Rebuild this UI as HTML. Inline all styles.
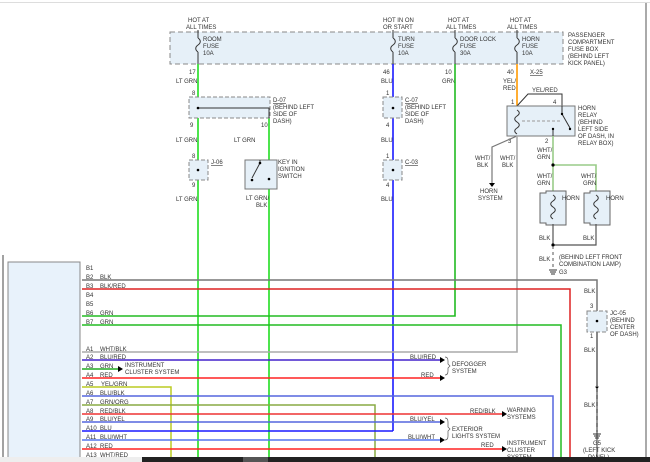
<!DOCTYPE html>
<html><head><meta charset="utf-8"><style>
html,body{margin:0;padding:0;background:#fff;}
svg{display:block;font-family:"Liberation Sans",sans-serif;}
text{font-size:6px;fill:#333;}
</style></head><body>
<svg width="650" height="462" viewBox="0 0 650 462" xmlns="http://www.w3.org/2000/svg">
<rect width="650" height="462" fill="#fff"/>
<line x1="0" y1="2.5" x2="650" y2="2.5" stroke="#ddd" stroke-width="1"/>
<line x1="646" y1="3" x2="646" y2="462" stroke="#555" stroke-width="1"/>
<line x1="3" y1="255" x2="3" y2="462" stroke="#444" stroke-width="1"/>

<!-- fuse box -->
<rect x="170" y="32" width="393" height="32" fill="#e6f0f8" stroke="#888" stroke-dasharray="5,3" stroke-width="1"/>
<g>
<text x="188" y="22">HOT AT</text><text x="186" y="29">ALL TIMES</text>
<text x="383" y="22">HOT IN ON</text><text x="383" y="29">OR START</text>
<text x="448" y="22">HOT AT</text><text x="446" y="29">ALL TIMES</text>
<text x="510" y="22">HOT AT</text><text x="507" y="29">ALL TIMES</text>
<text x="203" y="41">ROOM</text><text x="203" y="48">FUSE</text><text x="203" y="55">10A</text>
<text x="398" y="41">TURN</text><text x="398" y="48">FUSE</text><text x="398" y="55">10A</text>
<text x="460" y="41">DOOR LOCK</text><text x="460" y="48">FUSE</text><text x="460" y="55">30A</text>
<text x="522" y="41">HORN</text><text x="522" y="48">FUSE</text><text x="522" y="55">10A</text>
<text x="568" y="37">PASSENGER</text><text x="568" y="44">COMPARTMENT</text><text x="568" y="51">FUSE BOX</text><text x="568" y="58">(BEHIND LEFT</text><text x="568" y="65">KICK PANEL)</text>
</g>
<g stroke="#333" stroke-width="1" fill="none">
<path d="M198 30v8 M198 38c3 2 3 5 0 7 c-3 2-3 5 0 7 M198 52v12"/>
<path d="M393 30v8 M393 38c3 2 3 5 0 7 c-3 2-3 5 0 7 M393 52v12"/>
<path d="M455 30v8 M455 38c3 2 3 5 0 7 c-3 2-3 5 0 7 M455 52v12"/>
<path d="M517 30v8 M517 38c3 2 3 5 0 7 c-3 2-3 5 0 7 M517 52v12"/>
</g>
<text x="189" y="74">17</text><text x="383" y="74">46</text><text x="445" y="74">10</text><text x="507" y="74">40</text>
<text x="176" y="83">LT GRN</text><text x="381" y="83">BLU</text><text x="442" y="83">GRN</text>
<text x="503" y="83">YEL/</text><text x="503" y="90">RED</text>
<text x="530" y="74" text-decoration="underline">X-25</text>

<!-- wires top verticals -->
<g fill="none" stroke-width="1.6">
<line x1="198" y1="64" x2="198" y2="462" stroke="#22dd22"/>
<line x1="269" y1="108" x2="269" y2="160" stroke="#22dd22"/>
<line x1="269" y1="189" x2="269" y2="462" stroke="#22dd22"/>
<line x1="393" y1="64" x2="393" y2="431" stroke="#1a1aff"/>
<path d="M455 64V316H82" stroke="#22bb22"/>
<line x1="517" y1="64" x2="517" y2="106" stroke="#ff9900"/>
</g>

<!-- D-07 -->
<rect x="189" y="97" width="81" height="21" fill="#e6f0f8" stroke="#888" stroke-dasharray="4,2"/>
<path d="M198 108H269V118" stroke="#333" fill="none"/>
<circle cx="198" cy="108" r="1.3" fill="#000"/>
<text x="192" y="95">8</text><text x="190" y="127">9</text><text x="261" y="127">10</text>
<text x="273" y="102" text-decoration="underline">D-07</text><text x="273" y="109">(BEHIND LEFT</text><text x="273" y="116">SIDE OF</text><text x="273" y="123">DASH)</text>
<!-- C-07 -->
<rect x="383" y="97" width="19" height="21" fill="#e6f0f8" stroke="#888" stroke-dasharray="4,2"/>
<circle cx="393" cy="108" r="1.3" fill="#000"/>
<text x="386" y="95">1</text><text x="386" y="127">4</text>
<text x="405" y="102" text-decoration="underline">C-07</text><text x="405" y="109">(BEHIND LEFT</text><text x="405" y="116">SIDE OF</text><text x="405" y="123">DASH)</text>

<text x="176" y="142">LT GRN</text><text x="234" y="142">LT GRN</text><text x="381" y="142">BLU</text>
<!-- J-06 -->
<rect x="189" y="160" width="19" height="20" fill="#e6f0f8" stroke="#888" stroke-dasharray="4,2"/>
<circle cx="198" cy="170" r="1.3" fill="#000"/>
<text x="192" y="158">8</text><text x="192" y="187">9</text>
<text x="211" y="164" text-decoration="underline">J-06</text>
<!-- key switch -->
<rect x="245" y="160" width="32" height="29" fill="#e6f0f8" stroke="#777"/>
<path d="M260 160V162 M260 163L252 178" stroke="#333" fill="none"/>
<circle cx="260" cy="163" r="1.3" fill="#000"/><circle cx="252" cy="180" r="1.3" fill="#000"/><circle cx="269" cy="179" r="1.3" fill="#000"/>
<text x="278" y="164">KEY IN</text><text x="278" y="171">IGNITION</text><text x="278" y="178">SWITCH</text>
<text x="246" y="200">LT GRN/</text><text x="256" y="207">BLK</text>
<!-- C-03 -->
<rect x="383" y="160" width="19" height="20" fill="#e6f0f8" stroke="#888" stroke-dasharray="4,2"/>
<circle cx="393" cy="170" r="1.3" fill="#000"/>
<text x="386" y="158">1</text><text x="386" y="187">4</text>
<text x="405" y="164" text-decoration="underline">C-03</text>
<text x="176" y="201">LT GRN</text><text x="381" y="201">BLU</text>

<!-- horn relay -->
<path d="M517 106L528 94H562V106" stroke="#333" fill="none"/>
<text x="532" y="92">YEL/RED</text>
<rect x="507" y="106" width="68" height="30" fill="#e6f0f8" stroke="#777"/>
<path d="M517 110c3 2 3 4 0 6c-3 2-3 4 0 6c3 2 3 4 0 6c-3 2-3 4 0 6" stroke="#333" fill="none"/>
<line x1="522" y1="121" x2="560" y2="121" stroke="#999" stroke-dasharray="3,2"/>
<path d="M562 106V113 M562 114L570 128 M553 136V129" stroke="#333" fill="none"/>
<circle cx="562" cy="114" r="1.2" fill="#000"/><circle cx="570" cy="129" r="1.2" fill="#000"/><circle cx="553" cy="129" r="1.2" fill="#000"/>
<text x="511" y="104">1</text><text x="553" y="104">4</text><text x="508" y="143">3</text><text x="545" y="143">2</text>
<text x="578" y="110">HORN</text><text x="578" y="117">RELAY</text><text x="578" y="124">(BEHIND</text><text x="578" y="131">LEFT SIDE</text><text x="578" y="138">OF DASH, IN</text><text x="578" y="145">RELAY BOX)</text>
<path d="M517 136L492 147V183" stroke="#777" fill="none" stroke-width="1.2"/>
<path d="M489 183h6l-3 4z" fill="#000"/>
<text x="475" y="160">WHT/</text><text x="477" y="167">BLK</text>
<text x="500" y="160">WHT/</text><text x="502" y="167">BLK</text>
<text x="480" y="193">HORN</text><text x="478" y="200">SYSTEM</text>
<path d="M517 136V352H82" stroke="#aaa" fill="none" stroke-width="1.6"/>
<!-- WHT/GRN -->
<path d="M553 136V193 M553 165H596V193" stroke="#99cc88" fill="none" stroke-width="1.6"/>
<circle cx="553" cy="165" r="1.6" fill="#000"/>
<text x="537" y="152">WHT/</text><text x="537" y="159">GRN</text>
<text x="537" y="178">WHT/</text><text x="537" y="185">GRN</text>
<text x="581" y="178">WHT/</text><text x="583" y="185">GRN</text>
<path d="M540 193h6v-2h20v34h-20v-2h-6z" fill="#e6f0f8" stroke="#666"/>
<path d="M584 193h6v-2h20v34h-20v-2h-6z" fill="#e6f0f8" stroke="#666"/>
<path d="M553 195c3 2 3 4 0 6c-3 2-3 4 0 6c3 2 3 4 0 6c-3 2-3 4 0 6 M596 195c3 2 3 4 0 6c-3 2-3 4 0 6c3 2 3 4 0 6c-3 2-3 4 0 6" stroke="#333" fill="none"/>
<text x="562" y="200">HORN</text><text x="606" y="200">HORN</text>
<path d="M553 224V245H596V224" stroke="#555" fill="none" stroke-width="1.2"/>
<circle cx="553" cy="245" r="1.6" fill="#000"/>
<text x="539" y="240">BLK</text><text x="583" y="240">BLK</text>
<line x1="553" y1="246" x2="553" y2="268" stroke="#555" stroke-dasharray="3,3"/>
<text x="539" y="261">BLK</text>
<text x="559" y="259">(BEHIND LEFT FRONT</text><text x="559" y="266">COMBINATION LAMP)</text>
<path d="M549 270h8M550 272h6M551 274h4" stroke="#333"/><text x="559" y="274">G3</text>

<!-- left module -->
<rect x="8" y="262" width="72" height="200" fill="#e8f2fb" stroke="#888"/>
<g fill="none" stroke-width="1.5">
<path d="M82 280H597V462" stroke="#777"/>
<path d="M82 289H570V462" stroke="#dd2222"/>
<path d="M82 325H561V462" stroke="#22bb22"/>
<path d="M82 360H440" stroke="#4422cc"/>
<path d="M82 369H118" stroke="#22aa22"/>
<path d="M82 378H440" stroke="#ff2222"/>
<path d="M82 387H171V462" stroke="#bbcc22"/>
<path d="M82 396H553V462" stroke="#5566dd"/>
<path d="M82 405H375V462" stroke="#88aa44"/>
<path d="M82 414H502" stroke="#ee3333"/>
<path d="M82 422H440" stroke="#5566dd"/>
<path d="M82 431H393" stroke="#1a1aff"/>
<path d="M82 440H440" stroke="#5577ee"/>
<path d="M82 449H502" stroke="#ff2222"/>
</g>
<g fill="#000">
<path d="M118 366v6l5-3z"/>
<path d="M440 357v6l5-3z"/><path d="M440 375v6l5-3z"/>
<path d="M502 411v6l5-3z"/><path d="M440 419v6l5-3z"/><path d="M440 437v6l5-3z"/><path d="M502 446v6l5-3z"/>
</g>
<g>
<text x="86" y="270">B1</text>
<text x="86" y="279">B2</text><text x="100" y="279">BLK</text>
<text x="86" y="288">B3</text><text x="100" y="288">BLK/RED</text>
<text x="86" y="297">B4</text><text x="86" y="306">B5</text>
<text x="86" y="315">B6</text><text x="100" y="315">GRN</text>
<text x="86" y="324">B7</text><text x="100" y="324">GRN</text>
<text x="86" y="351">A1</text><text x="100" y="351">WHT/BLK</text>
<text x="86" y="359">A2</text><text x="100" y="359">BLU/RED</text>
<text x="86" y="368">A3</text><text x="100" y="368">GRN</text>
<text x="86" y="377">A4</text><text x="100" y="377">RED</text>
<text x="86" y="386">A5</text><text x="101" y="386">YEL/GRN</text>
<text x="86" y="395">A6</text><text x="100" y="395">BLU/BLK</text>
<text x="86" y="404">A7</text><text x="100" y="404">GRN/ORG</text>
<text x="86" y="413">A8</text><text x="100" y="413">RED/BLK</text>
<text x="86" y="421">A9</text><text x="100" y="421">BLU/YEL</text>
<text x="86" y="430">A10</text><text x="100" y="430">BLU</text>
<text x="86" y="439">A11</text><text x="100" y="439">BLU/WHT</text>
<text x="86" y="448">A12</text><text x="100" y="448">RED</text>
<text x="86" y="457">A13</text><text x="100" y="457">WHT/RED</text>
<text x="125" y="367">INSTRUMENT</text><text x="125" y="374">CLUSTER SYSTEM</text>
<text x="410" y="359">BLU/RED</text><text x="421" y="377">RED</text>
<text x="452" y="366">DEFOGGER</text><text x="452" y="373">SYSTEM</text>
<text x="470" y="413">RED/BLK</text><text x="507" y="412">WARNING</text><text x="507" y="419">SYSTEMS</text>
<text x="410" y="421">BLU/YEL</text><text x="408" y="439">BLU/WHT</text>
<text x="452" y="431">EXTERIOR</text><text x="452" y="438">LIGHTS SYSTEM</text>
<text x="481" y="447">RED</text><text x="507" y="445">INSTRUMENT</text><text x="507" y="452">CLUSTER</text><text x="507" y="459">SYSTEM</text>
</g>
<path d="M445 357q3 0 3 4v3l2 2l-2 2v3q0 4-3 4 M445 418q3 0 3 4v5l2 2l-2 2v5q0 4-3 4" stroke="#555" fill="none" stroke-width="0.7"/>

<!-- JC-05 -->
<text x="584" y="293">BLK</text>
<rect x="587" y="311" width="20" height="21" fill="#e6f0f8" stroke="#888" stroke-dasharray="4,2"/>
<circle cx="597" cy="321" r="1.3" fill="#000"/>
<text x="590" y="308">3</text><text x="590" y="338">1</text>
<text x="610" y="315">JC-05</text><text x="610" y="322">(BEHIND</text><text x="610" y="329">CENTER</text><text x="610" y="336">OF DASH)</text>
<text x="584" y="352">BLK</text>
<circle cx="597" cy="387" r="1.4" fill="#000"/>
<line x1="597" y1="388" x2="597" y2="432" stroke="#666" stroke-width="1.4" stroke-dasharray="4,3"/>
<line x1="597" y1="332" x2="597" y2="387" stroke="#777" stroke-width="1.5"/>
<text x="584" y="407">BLK</text>
<path d="M593 434h8M594 436h6M595 438h4" stroke="#333"/>
<text x="593" y="445">G5</text><text x="583" y="452">(LEFT KICK</text><text x="588" y="459">PANEL)</text>

<!-- bottom bar -->
<rect x="0" y="457" width="142" height="5" fill="#eee"/>
<rect x="142" y="457" width="508" height="5" fill="#222"/>
<rect x="243" y="457" width="25" height="5" fill="#555"/>
</svg>
</body></html>
